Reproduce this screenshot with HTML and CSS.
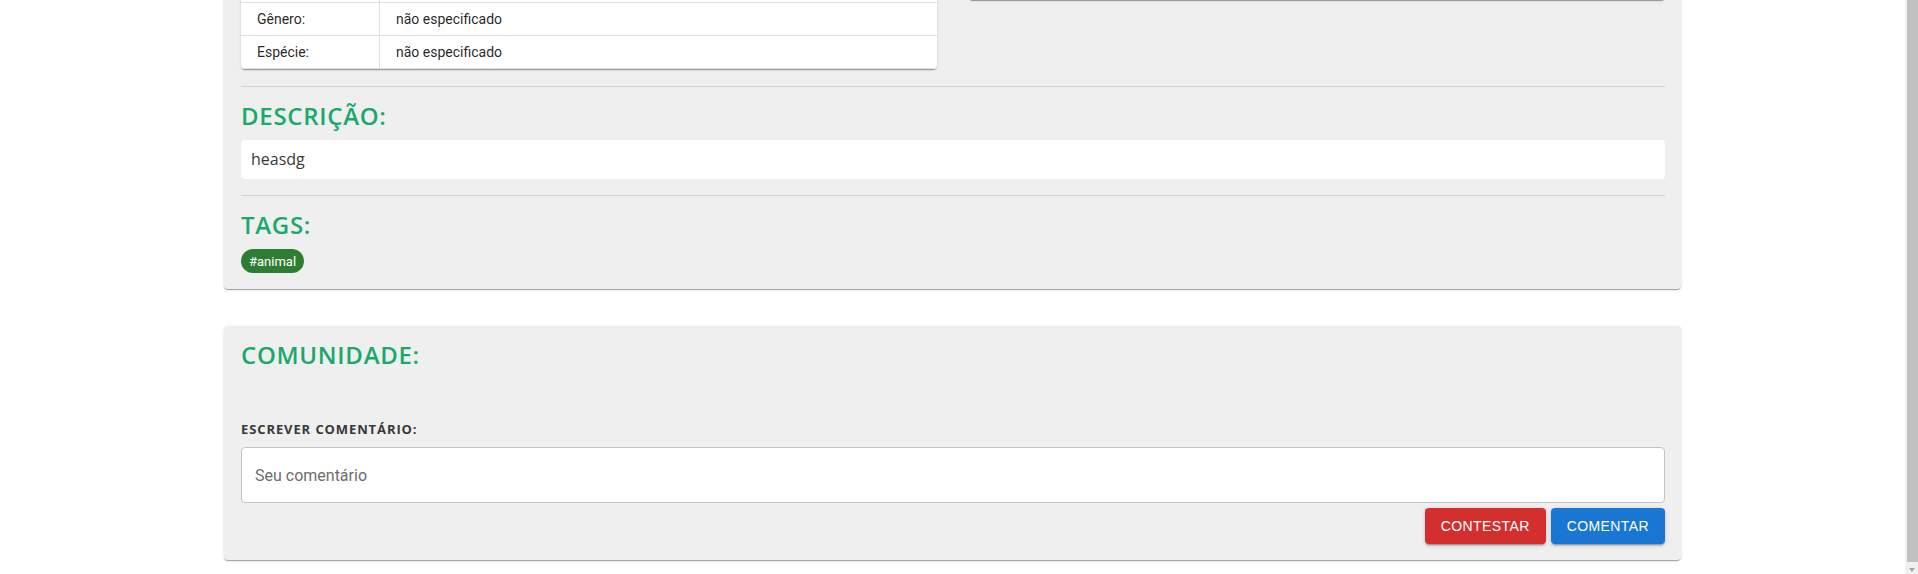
FILE: index.html
```html
<!DOCTYPE html>
<html lang="pt-BR">
<head>
<meta charset="utf-8">
<title>Detalhes da observação</title>
<link rel="stylesheet" href="styles.css">
</head>
<body>
<div class="viewport">
  <main class="page">
    <section class="card card-details">
      <div class="specs">
        <div class="table-paper">
          <table class="taxo">
            <tr class="taxo-row-hidden"><td class="taxo-key"></td><td></td></tr>
            <tr><td class="taxo-key">Gênero:</td><td>não especificado</td></tr>
            <tr><td class="taxo-key">Espécie:</td><td>não especificado</td></tr>
          </table>
        </div>
        <div class="media-paper"></div>
      </div>
      <hr class="divider">
      <h2 class="section-title">DESCRIÇÃO:</h2>
      <div class="desc-box">heasdg</div>
      <hr class="divider">
      <h2 class="section-title">TAGS:</h2>
      <div class="tags"><span class="chip">#animal</span></div>
    </section>

    <section class="card card-community">
      <h2 class="section-title">COMUNIDADE:</h2>
      <div class="comment-list"></div>
      <label class="field-label" for="comment">ESCREVER COMENTÁRIO:</label>
      <div class="text-field"><input id="comment" class="text-input" type="text" placeholder="Seu comentário"></div>
      <div class="actions">
        <button class="btn btn-red" type="button">CONTESTAR</button>
        <button class="btn btn-blue" type="button">COMENTAR</button>
      </div>
    </section>
  </main>
  <div class="scrollbar">
    <div class="scroll-thumb"></div>
    <div class="scroll-btn"><span class="scroll-arrow"></span></div>
  </div>
</div>
</body>
</html>
```

FILE: styles.css
```css
html, body {
  margin: 0;
  padding: 0;
  background: #ffffff;
}

body {
  font-family: Roboto, "Liberation Sans", Arial, sans-serif;
  color: rgba(0, 0, 0, 0.87);
}

.viewport {
  display: flex;
  height: 574px;
  overflow: hidden;
}

.page {
  flex: 1;
  min-width: 0;
}

.card {
  box-sizing: border-box;
  width: 1457px;
  margin: 0 auto;
  padding: 16px 16px 16px 17px;
  background: #efefef;
  border-radius: 4px;
  box-shadow: 0 2px 1px -1px rgba(0, 0, 0, 0.2),
              0 1px 1px 0 rgba(0, 0, 0, 0.14),
              0 1px 3px 0 rgba(0, 0, 0, 0.12);
}

.card-details {
  margin-top: -46px;
}

.card-community {
  margin-top: 37px;
}

/* ---------- specs grid ---------- */
.specs {
  display: grid;
  grid-template-columns: 696px 696px;
  column-gap: 32px;
  align-items: start;
  padding-bottom: 1px;
}

.table-paper {
  background: #ffffff;
  border-radius: 4px;
  overflow: hidden;
  box-shadow: 0 2px 1px -1px rgba(0, 0, 0, 0.2),
              0 1px 1px 0 rgba(0, 0, 0, 0.14),
              0 1px 3px 0 rgba(0, 0, 0, 0.12);
}

.taxo {
  width: 100%;
  border-collapse: separate;
  border-spacing: 0;
}

.taxo td {
  padding: 6px 16px;
  height: 20px;
  font-size: 14px;
  line-height: 20px;
  color: rgba(0, 0, 0, 0.87);
  border-bottom: 1px solid #e0e0e0;
  text-align: left;
}

.taxo .taxo-key {
  width: 106px;
  border-right: 1px solid #e0e0e0;
}

.media-paper {
  height: 30px;
  background: #ffffff;
  border-radius: 4px;
  box-shadow: 0 1px 0 0 #9a9a9a, 0 2px 2px 0 rgba(0, 0, 0, 0.08);
}

/* ---------- sections ---------- */
.divider {
  border: none;
  height: 1px;
  margin: 16px 0;
  background: rgba(0, 0, 0, 0.12);
}

.section-title {
  margin: 0 0 11px;
  font-family: "Open Sans", "Noto Sans", sans-serif;
  font-weight: 600;
  font-size: 24px;
  line-height: 26px;
  letter-spacing: 0.7px;
  color: #1aa96a;
}

.desc-box {
  background: #ffffff;
  border-radius: 4px;
  padding: 8px 10px;
  font-family: "Open Sans", "Noto Sans", sans-serif;
  font-size: 16px;
  line-height: 23px;
  color: #3a3a3a;
}

.tags {
  display: flex;
  gap: 8px;
}

.chip {
  display: inline-flex;
  align-items: center;
  height: 24px;
  padding: 0 8px;
  border-radius: 12px;
  background: #2e7d32;
  color: #ffffff;
  font-size: 13px;
}

/* ---------- community ---------- */
.comment-list {
  height: 41px;
}

.field-label {
  display: block;
  font-family: "Open Sans", "Noto Sans", sans-serif;
  font-weight: 700;
  font-size: 13px;
  line-height: 18px;
  letter-spacing: 0.9px;
  color: #383838;
  margin-bottom: 9px;
}

.text-field {
  box-sizing: border-box;
  height: 56px;
  border: 1px solid #c4c4c4;
  border-radius: 4px;
  background: #ffffff;
  display: flex;
  align-items: center;
}

.text-input {
  flex: 1;
  border: none;
  outline: none;
  background: transparent;
  padding: 0 14px 0 13px;
  font-family: Roboto, "Liberation Sans", Arial, sans-serif;
  font-size: 16px;
  line-height: 23px;
  color: rgba(0, 0, 0, 0.87);
}

.text-input::placeholder {
  color: #6d6d6d;
  opacity: 1;
}

.actions {
  display: flex;
  justify-content: flex-end;
  gap: 5px;
  margin-top: 5px;
}

.btn {
  border: none;
  border-radius: 4px;
  padding: 6px 16px;
  font-family: "Liberation Sans", Arial, sans-serif;
  font-size: 14px;
  line-height: 24px;
  letter-spacing: 0.4px;
  color: #ffffff;
  cursor: pointer;
  box-shadow: 0 3px 1px -2px rgba(0, 0, 0, 0.2),
              0 2px 2px 0 rgba(0, 0, 0, 0.14),
              0 1px 5px 0 rgba(0, 0, 0, 0.12);
}

.btn-red {
  background: #d32f2f;
}

.btn-blue {
  background: #1976d2;
}

/* ---------- scrollbar ---------- */
.scrollbar {
  width: 13px;
  flex: none;
  display: flex;
  flex-direction: column;
  background: #f1f1f1;
}

.scroll-thumb {
  flex: 1;
  margin-left: 2px;
  background: #c1c1c1;
}

.scroll-btn {
  height: 12px;
  padding: 6px 0 0 4px;
  box-sizing: border-box;
}

.scroll-arrow {
  display: block;
  width: 0;
  height: 0;
  border-left: 3.5px solid transparent;
  border-right: 3.5px solid transparent;
  border-top: 4px solid #a3a3a3;
}
```
